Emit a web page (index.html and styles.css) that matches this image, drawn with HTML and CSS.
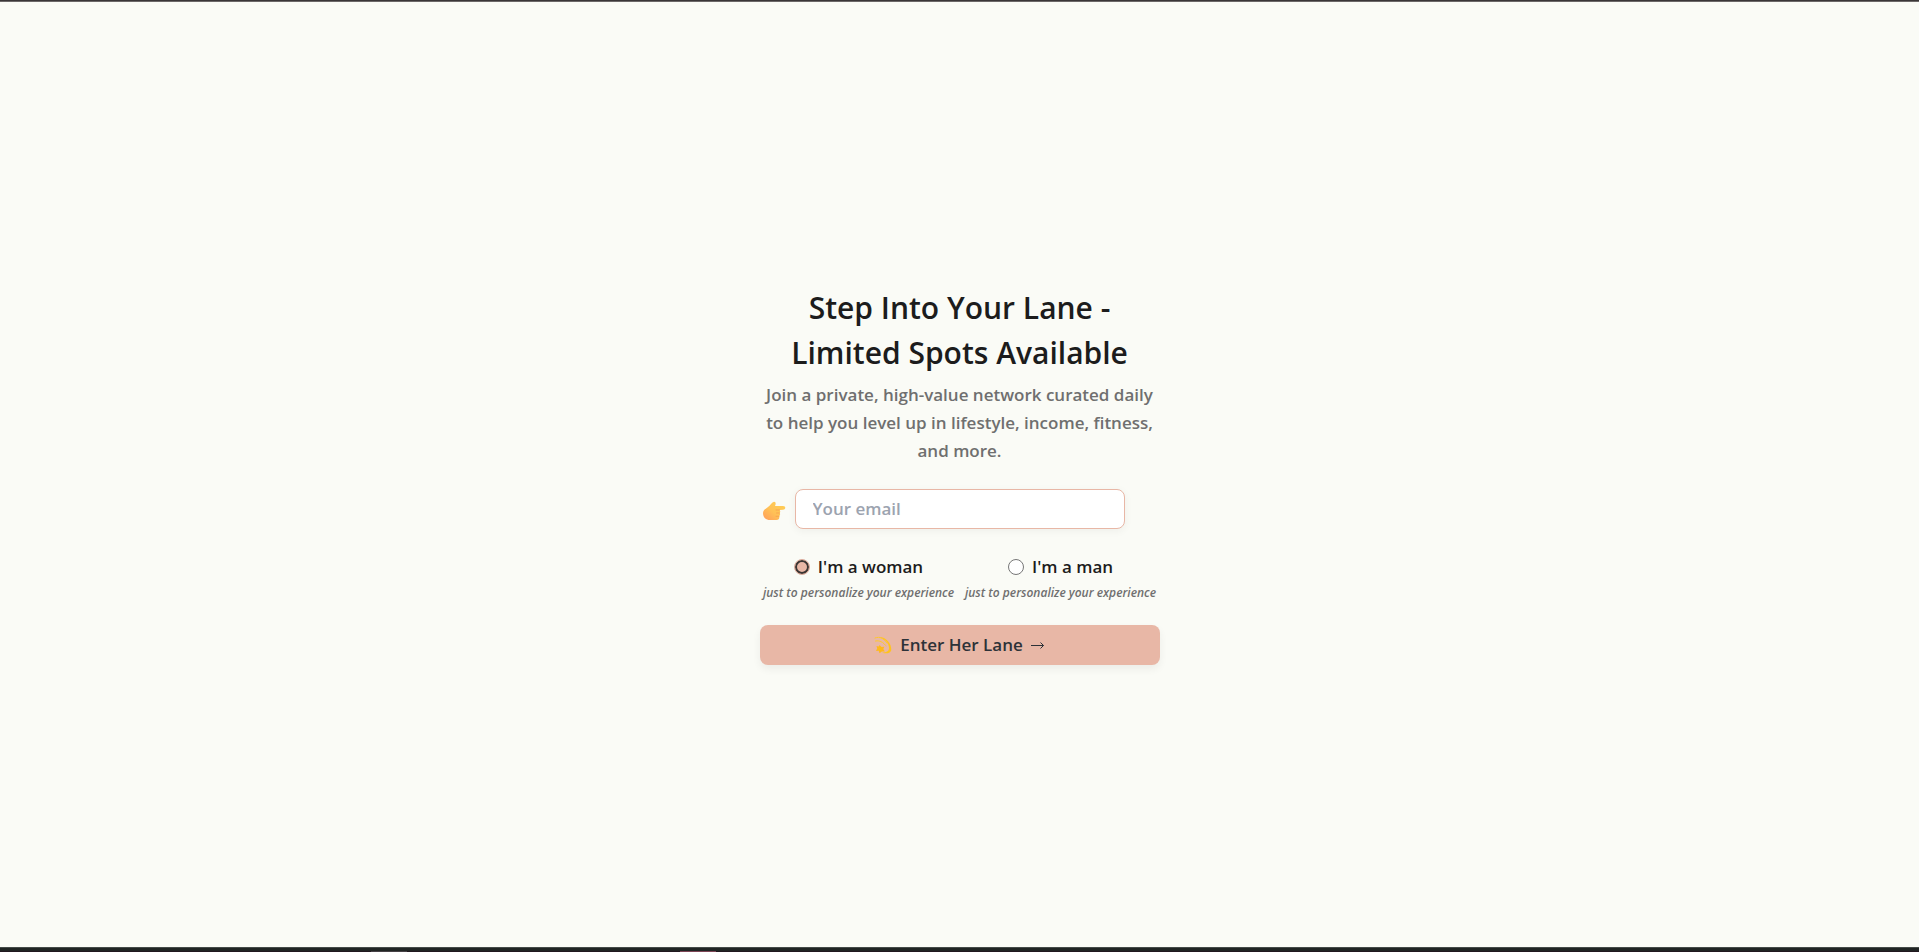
FILE: index.html
```html
<!DOCTYPE html>
<html lang="en">
<head>
<meta charset="utf-8">
<meta name="viewport" content="width=device-width, initial-scale=1">
<title>Step Into Your Lane</title>
<link rel="stylesheet" href="styles.css">
</head>
<body>
<div class="top-edge"></div>
<main class="page">
  <form class="signup">
    <h1 class="title">Step Into Your Lane - Limited Spots Available</h1>
    <p class="lead">Join a private, high-value network curated daily to help you level up in lifestyle, income, fitness, and more.</p>
    <div class="email-row">
      <svg class="hand" viewBox="0 0 24 20" aria-hidden="true">
        <defs>
          <linearGradient id="skin" x1="0" y1="1" x2="1" y2="0">
            <stop offset="0" stop-color="#ff9c5c"/>
            <stop offset=".45" stop-color="#ffc156"/>
            <stop offset="1" stop-color="#ffd055"/>
          </linearGradient>
        </defs>
        <path fill="url(#skin)" d="M1 12C1 9 4 7.500 6 6C8 4.500 10 1 12 .700C14 .600 14 3 13 5H21C24 5 24 8.500 21 8.800L17.500 9C18.500 10 18.500 11 17.700 12C18.500 13 18.200 14.500 17.200 15C17.700 17 17 19 14.500 19H8C4 19 1 16.500 1 12Z"/>
        <path fill="none" stroke="#f59a4e" stroke-width=".7" stroke-linecap="round" d="M14 9H17.500M14.500 12H17.500M14 15.300H17"/>
      </svg>
      <input class="email" type="email" placeholder="Your email" aria-label="Your email">
    </div>
    <div class="choices">
      <div class="choice">
        <label class="choice-label"><input class="radio" type="radio" name="lane" checked>I'm a woman</label>
        <span class="note">just to personalize your experience</span>
      </div>
      <div class="choice">
        <label class="choice-label"><input class="radio" type="radio" name="lane">I'm a man</label>
        <span class="note">just to personalize your experience</span>
      </div>
    </div>
    <button class="submit" type="button">
      <svg class="dizzy" viewBox="0 0 18 18" aria-hidden="true">
        <path fill="none" stroke="#ffc928" stroke-width="1" stroke-linecap="round" stroke-dasharray="3 1" d="M1 2C6 0 10 3 13 7M1.500 5C6 4 10 7 12 10"/>
        <path fill="#ffc31f" d="M5 .800C12 1 18 8 17.200 14.500C16 18 11 17.800 8 16.500C12 16.500 15 15.500 15 12C15 7 11 3 5 .800Z"/>
        <path fill="#ffb91c" d="M5.500 9L7.500 11L10.300 10.700L9.300 13L10.800 15.500L7.800 15.500L5.500 17.300L4.800 14.800L2 15L3.200 12.500L2.500 10L4.700 10.500Z"/>
      </svg>
      <span>Enter Her Lane</span>
      <svg class="arrow" viewBox="0 0 14 8" aria-hidden="true"><path fill="none" stroke="#2d3238" d="M0 4.500H12.500M9.500 1.500L12.500 4.500L9.500 7.500"/></svg>
    </button>
  </form>
</main>
<div class="bottom-edge">
  <span class="mark"></span>
  <span class="mark mark-rose"></span>
</div>
</body>
</html>
```
FILE: styles.css
```css
* {
  box-sizing: border-box;
}

body {
  margin: 0;
  min-height: 100vh;
  display: flex;
  flex-direction: column;
  background: #fafbf6;
  color: #1c1c1c;
  font: 600 17px/28px "Segoe UI", "Open Sans", "Noto Sans", sans-serif;
}

.top-edge {
  height: 2px;
  background: #3a3637;
  border-bottom: 1px solid #6c6868;
}

.bottom-edge {
  display: flex;
  align-items: flex-end;
  gap: 273px;
  height: 5px;
  padding-left: 371px;
  background: #202423;
  border-top: 1px solid #454b48;
  box-shadow: inset 0 -1px #21181f;
}

.mark {
  width: 36px;
  height: 1px;
  background: #454045;
}

.mark-rose {
  background: #7d4555;
}

.page {
  flex: 1;
  display: flex;
  align-items: center;
  justify-content: center;
}

.signup {
  width: 100%;
  max-width: 400px;
  display: flex;
  flex-direction: column;
  gap: 24px;
}

.title {
  margin: 0 0 -18px;
  padding: 0 24px;
  font-size: 30px;
  line-height: 45px;
  font-weight: 600;
  text-align: center;
}

.lead {
  margin: 0;
  color: #6f6f6f;
  text-align: center;
}

.email-row {
  display: flex;
  align-items: center;
  gap: 9px;
  padding: 0 35px 0 2px;
}

.hand {
  flex: none;
  width: 24px;
  height: 20px;
  margin-top: 4px;
}

.email {
  flex: 1;
  min-width: 0;
  height: 40px;
  padding: 0 17px;
  border: 1px solid #e8b7a6;
  border-radius: 8px;
  background: #fff;
  box-shadow: 0 2px 8px rgba(0, 0, 0, 0.05);
  color: #1c1c1c;
  font: inherit;
}

.email::placeholder {
  color: #9ca3af;
  opacity: 1;
}

.choices {
  display: grid;
  grid-template-columns: 1fr 1fr;
  gap: 4px;
}

.choice {
  display: flex;
  flex-direction: column;
  align-items: center;
  gap: 4px;
}

.choice-label {
  display: flex;
  align-items: center;
  gap: 8px;
}

.radio {
  appearance: none;
  width: 16px;
  height: 16px;
  margin: 0;
  border: 1px solid #767676;
  border-radius: 50%;
  background: #fff;
}

.radio:checked {
  border-color: #d9ab9c;
  background: #e8b7a6;
  box-shadow: inset 0 0 0 2px #3b3634;
}

.note {
  color: #6f6f6f;
  font-size: 12px;
  line-height: 16px;
  font-style: italic;
  white-space: nowrap;
}

.submit {
  display: flex;
  align-items: center;
  justify-content: center;
  gap: 8px;
  height: 40px;
  padding: 0;
  border: 0;
  border-radius: 8px;
  background: #e8b7a6;
  box-shadow: 0 4px 8px rgba(0, 0, 0, 0.06);
  color: #2d3238;
  font: inherit;
}

.dizzy {
  width: 18px;
  height: 18px;
}

.arrow {
  width: 14px;
  height: 8px;
}
```
